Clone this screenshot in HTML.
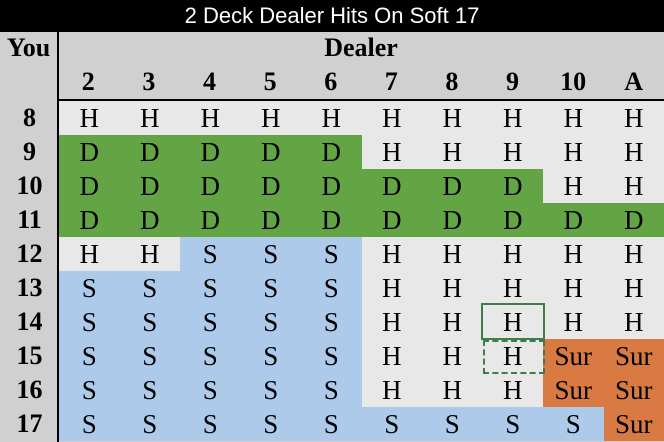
<!DOCTYPE html>
<html><head><style>
*{margin:0;padding:0;box-sizing:border-box}
body{width:664px;height:442px;overflow:hidden;background:#d0d0d0;position:relative;font-family:"Liberation Serif",serif}
.title{position:absolute;left:0;top:0;width:664px;height:32px;background:#000;color:#fff;font:22px/32px "Liberation Sans",sans-serif;text-align:center}
.you{position:absolute;left:0;top:33px;width:57px;text-align:center;font-weight:bold;font-size:26px}
.dealer{position:absolute;left:58px;top:33px;width:606px;text-align:center;font-weight:bold;font-size:26px}
.hdr{position:absolute;left:58px;top:67px;width:606px;display:grid;grid-template-columns:repeat(10,1fr);font-weight:bold;font-size:26px;text-align:center}
.hline{position:absolute;left:58px;top:99px;width:606px;height:2px;background:#000}
.vline{position:absolute;left:57px;top:32px;width:2px;height:410px;background:#000}
.grid{position:absolute;left:0;top:101px;width:664px;display:grid;grid-template-columns:59px repeat(10,1fr);grid-auto-rows:34px;font-size:27px;text-align:center}
.grid div{line-height:34px}
.l{font-weight:bold;font-size:26px;background:#d0d0d0}
.h{background:#e8e8e8}.d{background:#63a445}.s{background:#aecaea}.r{background:#d87a42}
.b1{position:absolute;left:481px;top:303px;width:64px;height:37px;border:2px solid #3d7d4a}
.b2{position:absolute;left:483px;top:340px;width:62px;height:34px;border:2px dashed #3d7d4a}
</style></head><body>
<div class="title">2 Deck Dealer Hits On Soft 17</div>
<div class="you">You</div>
<div class="dealer">Dealer</div>
<div class="hdr"><div>2</div><div>3</div><div>4</div><div>5</div><div>6</div><div>7</div><div>8</div><div>9</div><div>10</div><div>A</div></div>
<div class="grid">
<div class="l">8</div><div class="h">H</div><div class="h">H</div><div class="h">H</div><div class="h">H</div><div class="h">H</div><div class="h">H</div><div class="h">H</div><div class="h">H</div><div class="h">H</div><div class="h">H</div>
<div class="l">9</div><div class="d">D</div><div class="d">D</div><div class="d">D</div><div class="d">D</div><div class="d">D</div><div class="h">H</div><div class="h">H</div><div class="h">H</div><div class="h">H</div><div class="h">H</div>
<div class="l">10</div><div class="d">D</div><div class="d">D</div><div class="d">D</div><div class="d">D</div><div class="d">D</div><div class="d">D</div><div class="d">D</div><div class="d">D</div><div class="h">H</div><div class="h">H</div>
<div class="l">11</div><div class="d">D</div><div class="d">D</div><div class="d">D</div><div class="d">D</div><div class="d">D</div><div class="d">D</div><div class="d">D</div><div class="d">D</div><div class="d">D</div><div class="d">D</div>
<div class="l">12</div><div class="h">H</div><div class="h">H</div><div class="s">S</div><div class="s">S</div><div class="s">S</div><div class="h">H</div><div class="h">H</div><div class="h">H</div><div class="h">H</div><div class="h">H</div>
<div class="l">13</div><div class="s">S</div><div class="s">S</div><div class="s">S</div><div class="s">S</div><div class="s">S</div><div class="h">H</div><div class="h">H</div><div class="h">H</div><div class="h">H</div><div class="h">H</div>
<div class="l">14</div><div class="s">S</div><div class="s">S</div><div class="s">S</div><div class="s">S</div><div class="s">S</div><div class="h">H</div><div class="h">H</div><div class="h">H</div><div class="h">H</div><div class="h">H</div>
<div class="l">15</div><div class="s">S</div><div class="s">S</div><div class="s">S</div><div class="s">S</div><div class="s">S</div><div class="h">H</div><div class="h">H</div><div class="h">H</div><div class="r">Sur</div><div class="r">Sur</div>
<div class="l">16</div><div class="s">S</div><div class="s">S</div><div class="s">S</div><div class="s">S</div><div class="s">S</div><div class="h">H</div><div class="h">H</div><div class="h">H</div><div class="r">Sur</div><div class="r">Sur</div>
<div class="l">17</div><div class="s">S</div><div class="s">S</div><div class="s">S</div><div class="s">S</div><div class="s">S</div><div class="s">S</div><div class="s">S</div><div class="s">S</div><div class="s">S</div><div class="r">Sur</div>
</div>
<div class="vline"></div>
<div class="hline"></div>
<div class="b1"></div>
<div class="b2"></div>
</body></html>
